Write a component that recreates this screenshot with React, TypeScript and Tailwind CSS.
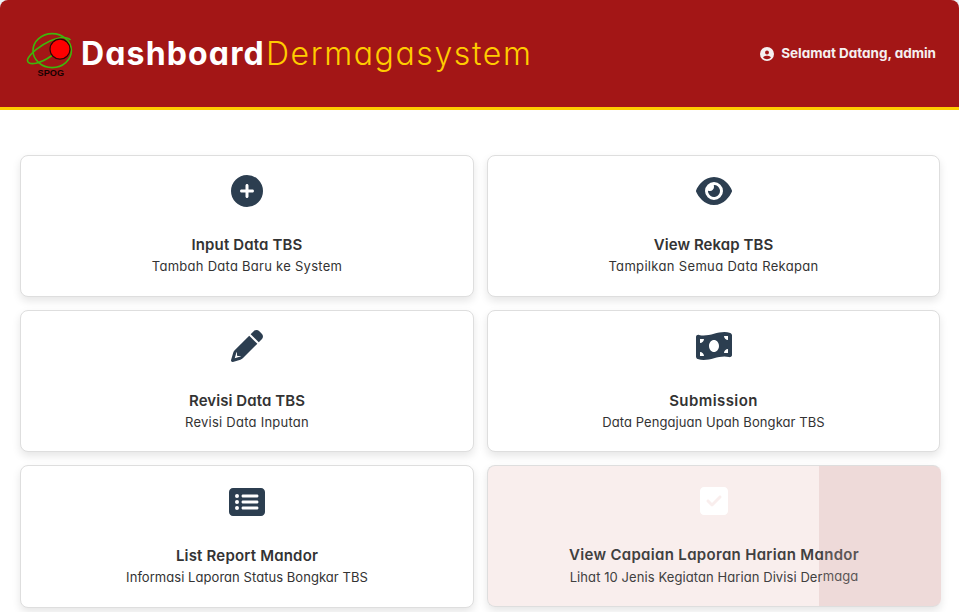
import type { ReactNode } from "react";
import {
  FaCirclePlus,
  FaCircleUser,
  FaEye,
  FaMoneyBillWave,
  FaRectangleList,
  FaSquareCheck,
} from "react-icons/fa6";

function Logo() {
  return (
    <svg width="48" height="46" viewBox="0 0 48 46" className="shrink-0" aria-label="SPOG">
      <g fill="none" stroke="#3fb60c" strokeWidth="1.6">
        <ellipse cx="26.2" cy="19.6" rx="19.2" ry="17" />
        <path d="M44.5 9C41 5.5 33 6 24 10C14 14.500 5 22 2 27.500C0 32 4.500 33.300 10 32.200C16 31 21 28 26 24.500" />
      </g>
      <circle cx="34" cy="18.2" r="10" fill="#fe0000" stroke="#2b0505" strokeWidth="1.2" />
      <text x="11.6" y="44.6" fontFamily="Liberation Sans, sans-serif" fontSize="9" fontWeight="700" textLength="26.5" lengthAdjust="spacingAndGlyphs" fill="#160202">
        SPOG
      </text>
    </svg>
  );
}

function Pencil() {
  return (
    <svg width="32" height="32" viewBox="0 0 512 512" fill="currentColor">
      <path d="M421.7 220.3L188.5 453.4L154.6 419.5L158.1 416H112C103.2 416 96 408.8 96 400V353.9L92.51 357.4C87.78 362.2 84.31 368 82.42 374.4L59.44 452.6L137.6 429.6C143.1 427.7 149.8 424.2 154.6 419.5L188.5 453.4C178.1 463.8 165.2 471.5 151.1 475.6L30.77 511C22.35 513.5 13.24 511.2 7.03 504.1C.82 498.8-1.5 489.7 .976 481.2L36.37 360.9C40.53 346.8 48.16 333.9 58.57 323.5L291.7 90.34L421.7 220.3zM492.7 58.75C517.7 83.74 517.7 124.3 492.7 149.3L444.3 197.7L314.3 67.72L362.7 19.32C387.7-5.678 428.3-5.678 453.3 19.32L492.7 58.75z" />
    </svg>
  );
}

interface CardProps {
  icon: ReactNode;
  title: string;
  text: string;
  className: string;
  titleClass: string;
  textClass: string;
}

function Card({ icon, title, text, className, titleClass, textClass }: CardProps) {
  return (
    <div className={`flex flex-col items-center rounded-lg border border-[#dedede] bg-white whitespace-nowrap text-[#333] shadow-[0_4px_8px_rgba(0,0,0,0.1)] ${className}`}>
      <div className="flex h-8 items-center text-[32px] text-[#2c3e50]">{icon}</div>
      <h3 className={`text-[15px] leading-[22px] font-semibold ${titleClass}`}>{title}</h3>
      <p className={`text-[13px] leading-[20px] ${textClass}`}>{text}</p>
    </div>
  );
}

export default function App() {
  return (
    <div className="h-[612px] w-[960px] overflow-hidden bg-white font-[Inter,sans-serif] [font-feature-settings:'cv11']">
      <div className="w-[959px] bg-[#eef2f5]">
        <header className="flex h-[110px] items-center justify-between rounded-t-lg border-b-3 border-[#ffcc00] bg-[#a31616] pr-[23px] pl-[26px]">
          <div className="flex items-center gap-[7px]">
            <Logo />
            <h1 className="flex text-[32px] leading-[46px] whitespace-nowrap">
              <span className="w-[185px] font-bold tracking-[1.15px] text-white">Dashboard</span>
              <span className="font-light tracking-[1.6px] text-[#ffcc00]">Dermagasystem</span>
            </h1>
          </div>
          <div className="flex items-center gap-[7px] text-[13.5px] font-bold tracking-[-0.02px] whitespace-nowrap text-[#f5f0f0]">
            <FaCircleUser className="text-[14px]" />
            <span>Selamat Datang, admin</span>
          </div>
        </header>
      </div>
      <main className="grid grid-cols-[454px_453px] gap-x-[13px] gap-y-[13px] px-5 pt-[45px]">
        <Card icon={<FaCirclePlus className="mr-px" />} title="Input Data TBS" text="Tambah Data Baru ke System" className="h-[142px] pt-[19px]" titleClass="mt-[27px] tracking-[0.15px]" textClass="tracking-[0.27px]" />
        <Card icon={<FaEye className="w-9" />} title="View Rekap TBS" text="Tampilkan Semua Data Rekapan" className="h-[142px] pt-[19px]" titleClass="mt-[27px] tracking-[0.08px]" textClass="tracking-[0.33px]" />
        <Card icon={<Pencil />} title="Revisi Data TBS" text="Revisi Data Inputan" className="h-[142px] pt-[19px]" titleClass="mt-[28px] tracking-[0.08px]" textClass="tracking-[0.24px]" />
        <Card icon={<FaMoneyBillWave className="w-9" />} title="Submission" text="Data Pengajuan Upah Bongkar TBS" className="h-[142px] pt-[19px]" titleClass="mt-[28px] tracking-[0.42px]" textClass="tracking-[0.08px]" />
        <Card icon={<FaRectangleList className="mr-px w-9" />} title="List Report Mandor" text="Informasi Laporan Status Bongkar TBS" className="h-[143px] pt-[20px]" titleClass="mt-[27px] tracking-[0.19px]" textClass="tracking-[0.05px]" />
        <div className="flex h-[142px] w-[454px] flex-col items-center rounded-lg border border-[#dedede] border-r-[#eedad9] bg-[linear-gradient(to_right,#f9eeed_332px,#eedad9_332px)] bg-origin-border pt-[19px] whitespace-nowrap text-[#404040] shadow-[0_4px_8px_rgba(0,0,0,0.1)]">
          <FaSquareCheck className="mr-px shrink-0 text-[32px] text-white" />
          <h3 className="mt-[27px] text-[15px] leading-[22px] font-semibold tracking-[0.32px]">
            View Capaian Laporan Harian Ma<span className="text-[#5a5555]">ndor</span>
          </h3>
          <p className="text-[13px] leading-[22px] tracking-[0.08px]">
            Lihat 10 Jenis Kegiatan Harian Divisi Der<span className="relative -top-px text-[#5a5555]">maga</span>
          </p>
        </div>
      </main>
    </div>
  );
}
